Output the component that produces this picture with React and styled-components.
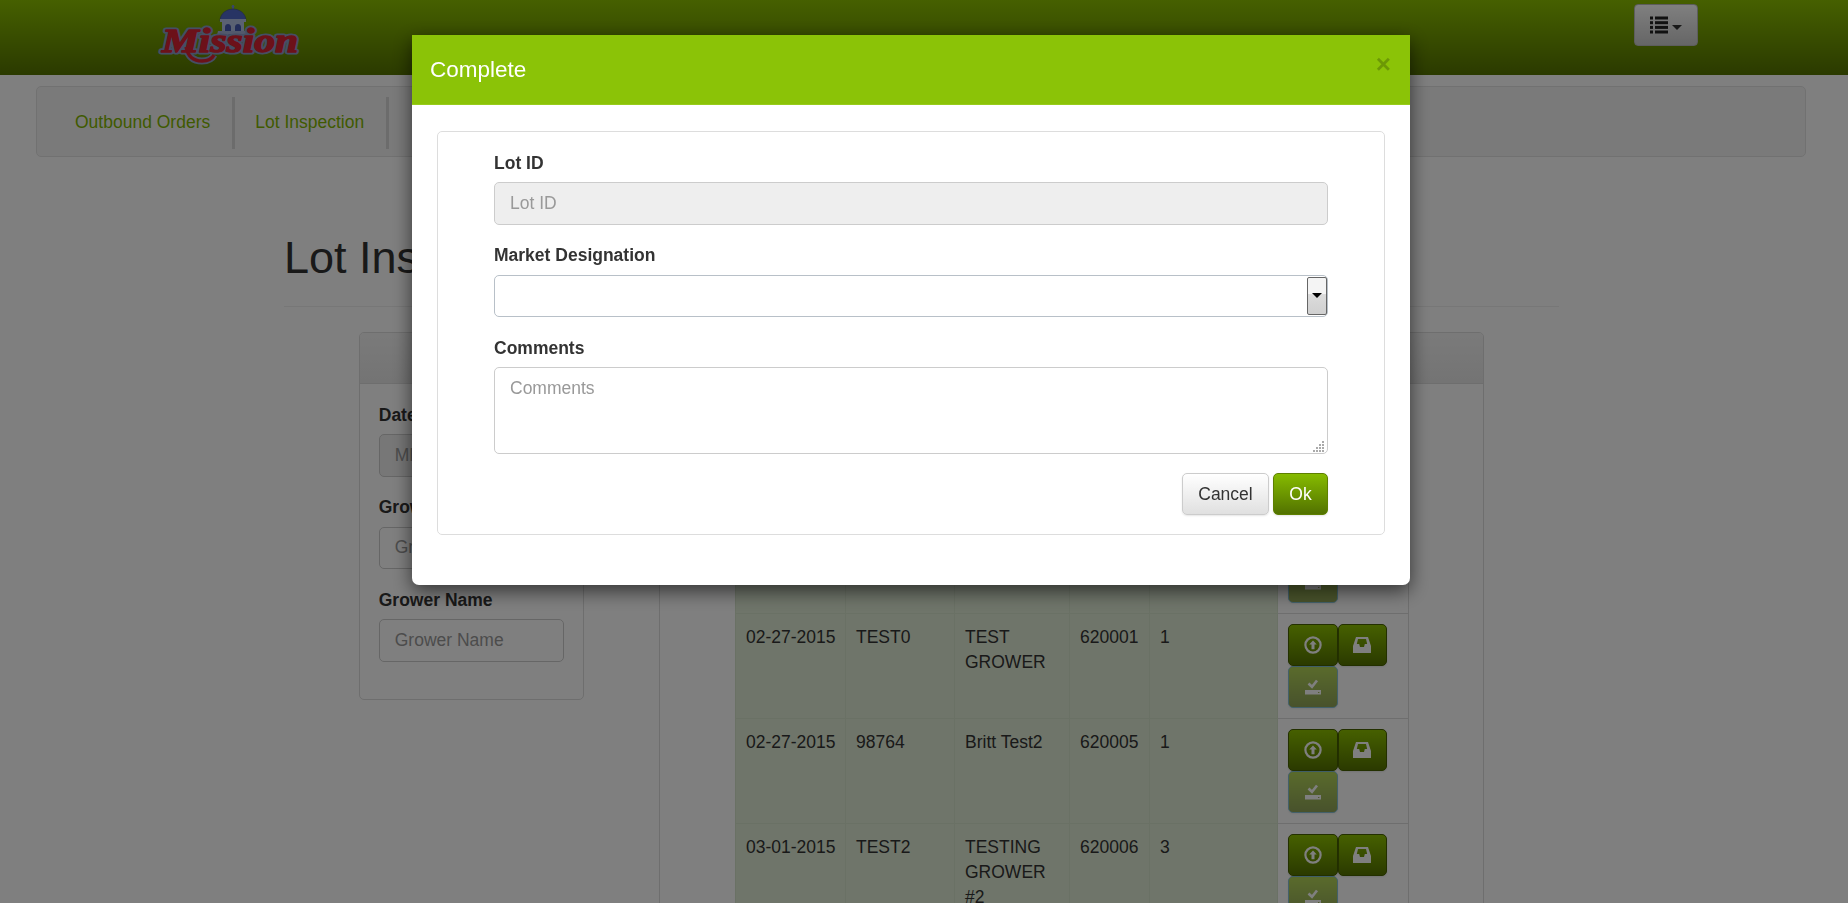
import React from "react";
import styled, { createGlobalStyle } from "styled-components";

const Global = createGlobalStyle`
  html, body { margin: 0; height: 903px; overflow: hidden; background: #fff; }
  body { font-family: "Liberation Sans", Arial, sans-serif; font-size: 17.5px; line-height: 25px; color: #333; }
  * { box-sizing: border-box; }
  ::placeholder { color: #999; opacity: 1; }
`;

const Navbar = styled.header`
  height: 75px; display: flex; align-items: flex-start; justify-content: space-between;
  padding: 0 150px 0 156px;
  background: linear-gradient(to bottom, #8cc000, #567400);
`;
const LogoSvg = styled.svg`display: block; margin-top: 5px;`;
const MenuButton = styled.button`
  margin-top: 4px; width: 64px; height: 42px; padding: 0; display: flex; align-items: center; justify-content: center; gap: 4px;
  background: linear-gradient(to bottom, #fff, #ccc); border: 1px solid #bbb; border-radius: 4px;
`;
const Caret = styled.span`
  width: 0; height: 0; margin-top: 5px; border-left: 5px solid transparent; border-right: 5px solid transparent; border-top: 5px solid #333;
`;

const NavWell = styled.nav`
  margin: 11px 42px 0 36px; height: 71px; padding: 10px 0 0 18px; display: flex; align-items: flex-start;
  background: #f5f5f5; border: 1px solid #e3e3e3; border-radius: 5px;
`;
const NavLink = styled.a`
  display: block; height: 52px; padding: 13px 22px 13px 20px; color: #80b400; border-right: 3px solid #d8d8d8;
`;

const Page = styled.main`width: 1275px; margin-left: 284px;`;
const PageHeader = styled.div`margin-top: 76px; padding-bottom: 23px; border-bottom: 1px solid #eee;`;
const Title = styled.h1`margin: 0; font-size: 45px; line-height: 50px; font-weight: 400; color: #333;`;
const Columns = styled.div`display: flex; align-items: flex-start; gap: 75px; padding: 25px 75px 0;`;
const Panel = styled.section`
  width: ${p => p.$width}px; flex: none; background: #fff; border: 1px solid #ddd; border-radius: 5px; overflow: hidden;
`;
const PanelHead = styled.div`height: 51px; background: linear-gradient(to bottom, #f5f5f5, #e8e8e8); border-bottom: 1px solid #ddd;`;
const PanelBody = styled.div`padding: ${p => p.$pad};`;

const Group = styled.div`margin-bottom: 18.75px;`;
const Label = styled.label`display: block; margin-bottom: 6.25px; font-weight: 700; color: #333;`;
const Input = styled.input`
  display: block; width: 100%; height: 42.5px; padding: 7.5px 15px; font: inherit; color: #555;
  background: ${p => (p.disabled ? "#eee" : "#fff")}; border: 1px solid #ccc; border-radius: 5px;
`;
const SelectBox = styled.div`
  display: flex; height: 42.5px; padding: 1px 0 1px 1px; background: #fff; border: 1px solid #b8c0c8; border-radius: 5px;
`;
const Select = styled.select`flex: 1; min-width: 0; border: 0; outline: 0; background: transparent; appearance: none; font: inherit;`;
const SelectArrow = styled.span`
  width: 20px; display: flex; align-items: center; justify-content: center;
  background: linear-gradient(to bottom, #f4f4f4 0 45%, #dcdcdc 45%, #d0d0d0);
  border: 1px solid #666; border-radius: 2px;
  &::after { content: ""; width: 0; height: 0; border-left: 5px solid transparent; border-right: 5px solid transparent; border-top: 5px solid #000; }
`;
const TextAreaWrap = styled.div`position: relative;`;
const TextArea = styled.textarea`
  display: block; width: 100%; height: 87px; padding: 7.5px 15px; font: inherit; color: #555; background: #fff; border: 1px solid #ccc; border-radius: 5px; resize: none;
`;
const Grip = styled.svg`position: absolute; right: 3px; bottom: 2px;`;

const Table = styled.table`width: 673px; table-layout: fixed; border-collapse: collapse;`;
const HeadRow = styled.tr`height: 105px;`;
const Th = styled.th`padding: 10px; text-align: left; vertical-align: bottom; border: 1px solid #ddd;`;
const Td = styled.td`
  padding: ${p => (p.$action ? "10px" : "11px 10px 10px")}; vertical-align: top; color: #333; border: 1px solid ${p => (p.$action ? "#ddd" : "#d4e2ca")};
  background: ${p => (p.$action ? "#fff" : "#dfebd5")};
  white-space: ${p => (p.$nowrap ? "nowrap" : "normal")};
`;
const Actions = styled.div`display: flex; flex-wrap: wrap; width: 105px;`;
const IconButton = styled.button`
  width: 49.5px; height: 42px; padding: 0; display: flex; align-items: center; justify-content: center; border-radius: 5px;
  border: 1px solid ${p => (p.disabled ? "#46a0c0" : "#466000")};
  background: linear-gradient(to bottom, #8cc000, #567400);
  box-shadow: 0 1px 2px rgba(0,0,0,.1);
  opacity: ${p => (p.disabled ? 0.65 : 1)};
`;

const Backdrop = styled.div`position: fixed; inset: 0; background: rgba(0,0,0,.5);`;
const Modal = styled.div`
  position: fixed; top: 35px; left: 412px; width: 998px; height: 550px; background: #fff; border-radius: 0 0 7px 7px;
  box-shadow: 0 6px 19px rgba(0,0,0,.6); overflow: hidden;
`;
const ModalHead = styled.div`
  height: 70px; display: flex; align-items: center; justify-content: space-between; padding: 0 19px 0 18px; background: #8bc307; border-bottom: 1px solid #98cc1c;
`;
const ModalTitle = styled.h4`margin: 0; font-size: 22.5px; line-height: 25px; font-weight: 400; color: #fff;`;
const Close = styled.button`
  margin-top: -12px; padding: 0; border: 0; background: none; font: 700 26px/1 "Liberation Sans", Arial, sans-serif; color: rgba(0,0,0,.22);
`;
const ModalBody = styled.div`padding: 26px 25px;`;
const FormWell = styled.form`
  border: 1px solid #ddd; border-radius: 5px; padding: 18.75px 56px; background: #fff;
`;
const ButtonRow = styled.div`display: flex; justify-content: flex-end; gap: 4px;`;
const Button = styled.button`
  height: 42.5px; min-width: ${p => (p.$primary ? "55px" : "87px")}; padding: 0 15px; font: inherit; border-radius: 5px; box-shadow: 0 1px 2px rgba(0,0,0,.1);
  border: 1px solid ${p => (p.$primary ? "#5e8000" : "#ccc")};
  color: ${p => (p.$primary ? "#fff" : "#333")};
  background: ${p => (p.$primary ? "linear-gradient(to bottom, #86bb00, #527200)" : "linear-gradient(to bottom, #fff, #e0e0e0)")};
`;

const logoText = { fontFamily: "'Liberation Serif', serif", fontWeight: 700, fontStyle: "italic", fontSize: 34 };

const Logo = () => (
  <LogoSvg width="146" height="60" viewBox="0 0 146 60">
    <line x1="77" y1="0" x2="77" y2="5" stroke="#7088d8" strokeWidth="1.5" />
    <circle cx="77" cy="1.6" r="1.4" fill="#7088d8" />
    <path d="M64 16 C64 8 71 4 77 4 C83 4 90 8 90 16 Z" fill="#5068c8" stroke="#3a4890" strokeWidth=".6" />
    <rect x="64" y="14" width="26" height="3" fill="#b4c2e4" />
    <rect x="66" y="17" width="22" height="10" fill="#b4c2e4" />
    <path d="M69 27 V22 C69 18 75 18 75 22 V27 Z M79 27 V22 C79 18 85 18 85 22 V27 Z" fill="#4458b0" />
    <path d="M62 26 H92 L95 34 H60 Z" fill="#a4b2d8" />
    <path d="M68 34 C70 28 78 28 80 34 Z" fill="#4458b0" />
    <path d="M30 42 C32 52 38 56 46 56 C52 56 56 54 58 50" fill="none" stroke="#8a9cc8" strokeWidth="7" />
    <text x="6" y="47" textLength="136" lengthAdjust="spacingAndGlyphs" style={logoText} fill="#8a9cc8" stroke="#8a9cc8" strokeWidth="5" strokeLinejoin="round">Mission</text>
    <path d="M30 42 C32 52 38 56 46 56 C52 56 56 54 58 50" fill="none" stroke="#d82232" strokeWidth="3.4" />
    <text x="6" y="47" textLength="136" lengthAdjust="spacingAndGlyphs" style={logoText} fill="#d82232" stroke="#d82232" strokeWidth="1.4" strokeLinejoin="round">Mission</text>
  </LogoSvg>
);

const ListIcon = () => (
  <svg width="18" height="18" viewBox="0 0 18 18" fill="#222">
    {[0.5, 5.2, 9.9, 14.5].map(y => (
      <g key={y}>
        <rect x="0" y={y} width="3" height="3" />
        <rect x="5" y={y} width="13" height="3" />
      </g>
    ))}
  </svg>
);
const UploadIcon = () => (
  <svg width="18" height="18" viewBox="0 0 18 18">
    <circle cx="9" cy="9" r="7.6" fill="none" stroke="#fff" strokeWidth="2.2" />
    <path d="M9 4.4 L12.8 8.6 H10.5 V13.2 H7.5 V8.6 H5.2 Z" fill="#fff" />
  </svg>
);
const InboxIcon = () => (
  <svg width="20" height="18" viewBox="0 0 20 18">
    <path fillRule="evenodd" fill="#fff" d="M4 1 H16 L19 10 V17 H1 V10 Z M6 3 H14 L15.2 8 H12.8 L12 11 H8 L7.2 8 H4.8 Z" />
  </svg>
);
const SaveIcon = () => (
  <svg width="18" height="18" viewBox="0 0 18 18">
    <path d="M4.5 5.5 L8 8.8 L13 2.5" fill="none" stroke="#fff" strokeWidth="2.6" />
    <path fillRule="evenodd" fill="#fff" d="M1 12 H17 V16.5 H1 Z M14 14 h1.4 v1 h-1.4 Z" />
  </svg>
);
const GripIcon = () => (
  <Grip width="12" height="11" viewBox="0 0 12 11" fill="#aaa">
    {[[9, 0], [6, 3], [9, 3], [3, 6], [6, 6], [9, 6], [0, 9], [3, 9], [6, 9], [9, 9]].map(([x, y]) => (
      <rect key={`${x}-${y}`} x={x} y={y} width="2" height="2" />
    ))}
  </Grip>
);

const rows = [
  ["02-27-2015", "TEST1", "TEST GROWER", "620000", "1"],
  ["02-27-2015", "TEST0", "TEST GROWER", "620001", "1"],
  ["02-27-2015", "98764", "Britt Test2", "620005", "1"],
  ["03-01-2015", "TEST2", "TESTING GROWER #2", "620006", "3"],
];
const widths = [110, 109, 115, 80, 128, 131];

export default function App() {
  return (
    <>
      <Global />
      <Navbar>
        <Logo />
        <MenuButton><ListIcon /><Caret /></MenuButton>
      </Navbar>
      <NavWell>
        <NavLink>Outbound Orders</NavLink>
        <NavLink>Lot Inspection</NavLink>
      </NavWell>
      <Page>
        <PageHeader><Title>Lot Inspection</Title></PageHeader>
        <Columns>
          <Panel $width={225}>
            <PanelHead />
            <PanelBody $pad="18.75px 18.75px 18.75px">
              <Group><Label>Date</Label><Input disabled placeholder="MM-DD-YYYY" /></Group>
              <Group><Label>Grower ID</Label><Input placeholder="Grower ID" /></Group>
              <Group><Label>Grower Name</Label><Input placeholder="Grower Name" /></Group>
            </PanelBody>
          </Panel>
          <Panel $width={825}>
            <PanelHead />
            <PanelBody $pad="19px 75px 20px">
              <Table>
                <colgroup>{widths.map((w, i) => <col key={i} style={{ width: w }} />)}</colgroup>
                <thead>
                  <HeadRow><Th>Date</Th><Th>Lot ID</Th><Th>Grower Name</Th><Th>Lot</Th><Th>Qty</Th><Th /></HeadRow>
                </thead>
                <tbody>
                  {rows.map((r, i) => (
                    <tr key={i}>
                      {r.map((c, j) => <Td key={j} $nowrap={j === 0}>{c}</Td>)}
                      <Td $action>
                        <Actions>
                          <IconButton><UploadIcon /></IconButton>
                          <IconButton><InboxIcon /></IconButton>
                          <IconButton disabled><SaveIcon /></IconButton>
                        </Actions>
                      </Td>
                    </tr>
                  ))}
                </tbody>
              </Table>
            </PanelBody>
          </Panel>
        </Columns>
      </Page>
      <Backdrop />
      <Modal>
        <ModalHead>
          <ModalTitle>Complete</ModalTitle>
          <Close type="button">×</Close>
        </ModalHead>
        <ModalBody>
          <FormWell>
            <Group><Label>Lot ID</Label><Input disabled placeholder="Lot ID" /></Group>
            <Group>
              <Label>Market Designation</Label>
              <SelectBox>
                <Select><option></option></Select>
                <SelectArrow />
              </SelectBox>
            </Group>
            <Group>
              <Label>Comments</Label>
              <TextAreaWrap>
                <TextArea placeholder="Comments" />
                <GripIcon />
              </TextAreaWrap>
            </Group>
            <ButtonRow>
              <Button type="button">Cancel</Button>
              <Button type="button" $primary>Ok</Button>
            </ButtonRow>
          </FormWell>
        </ModalBody>
      </Modal>
    </>
  );
}
